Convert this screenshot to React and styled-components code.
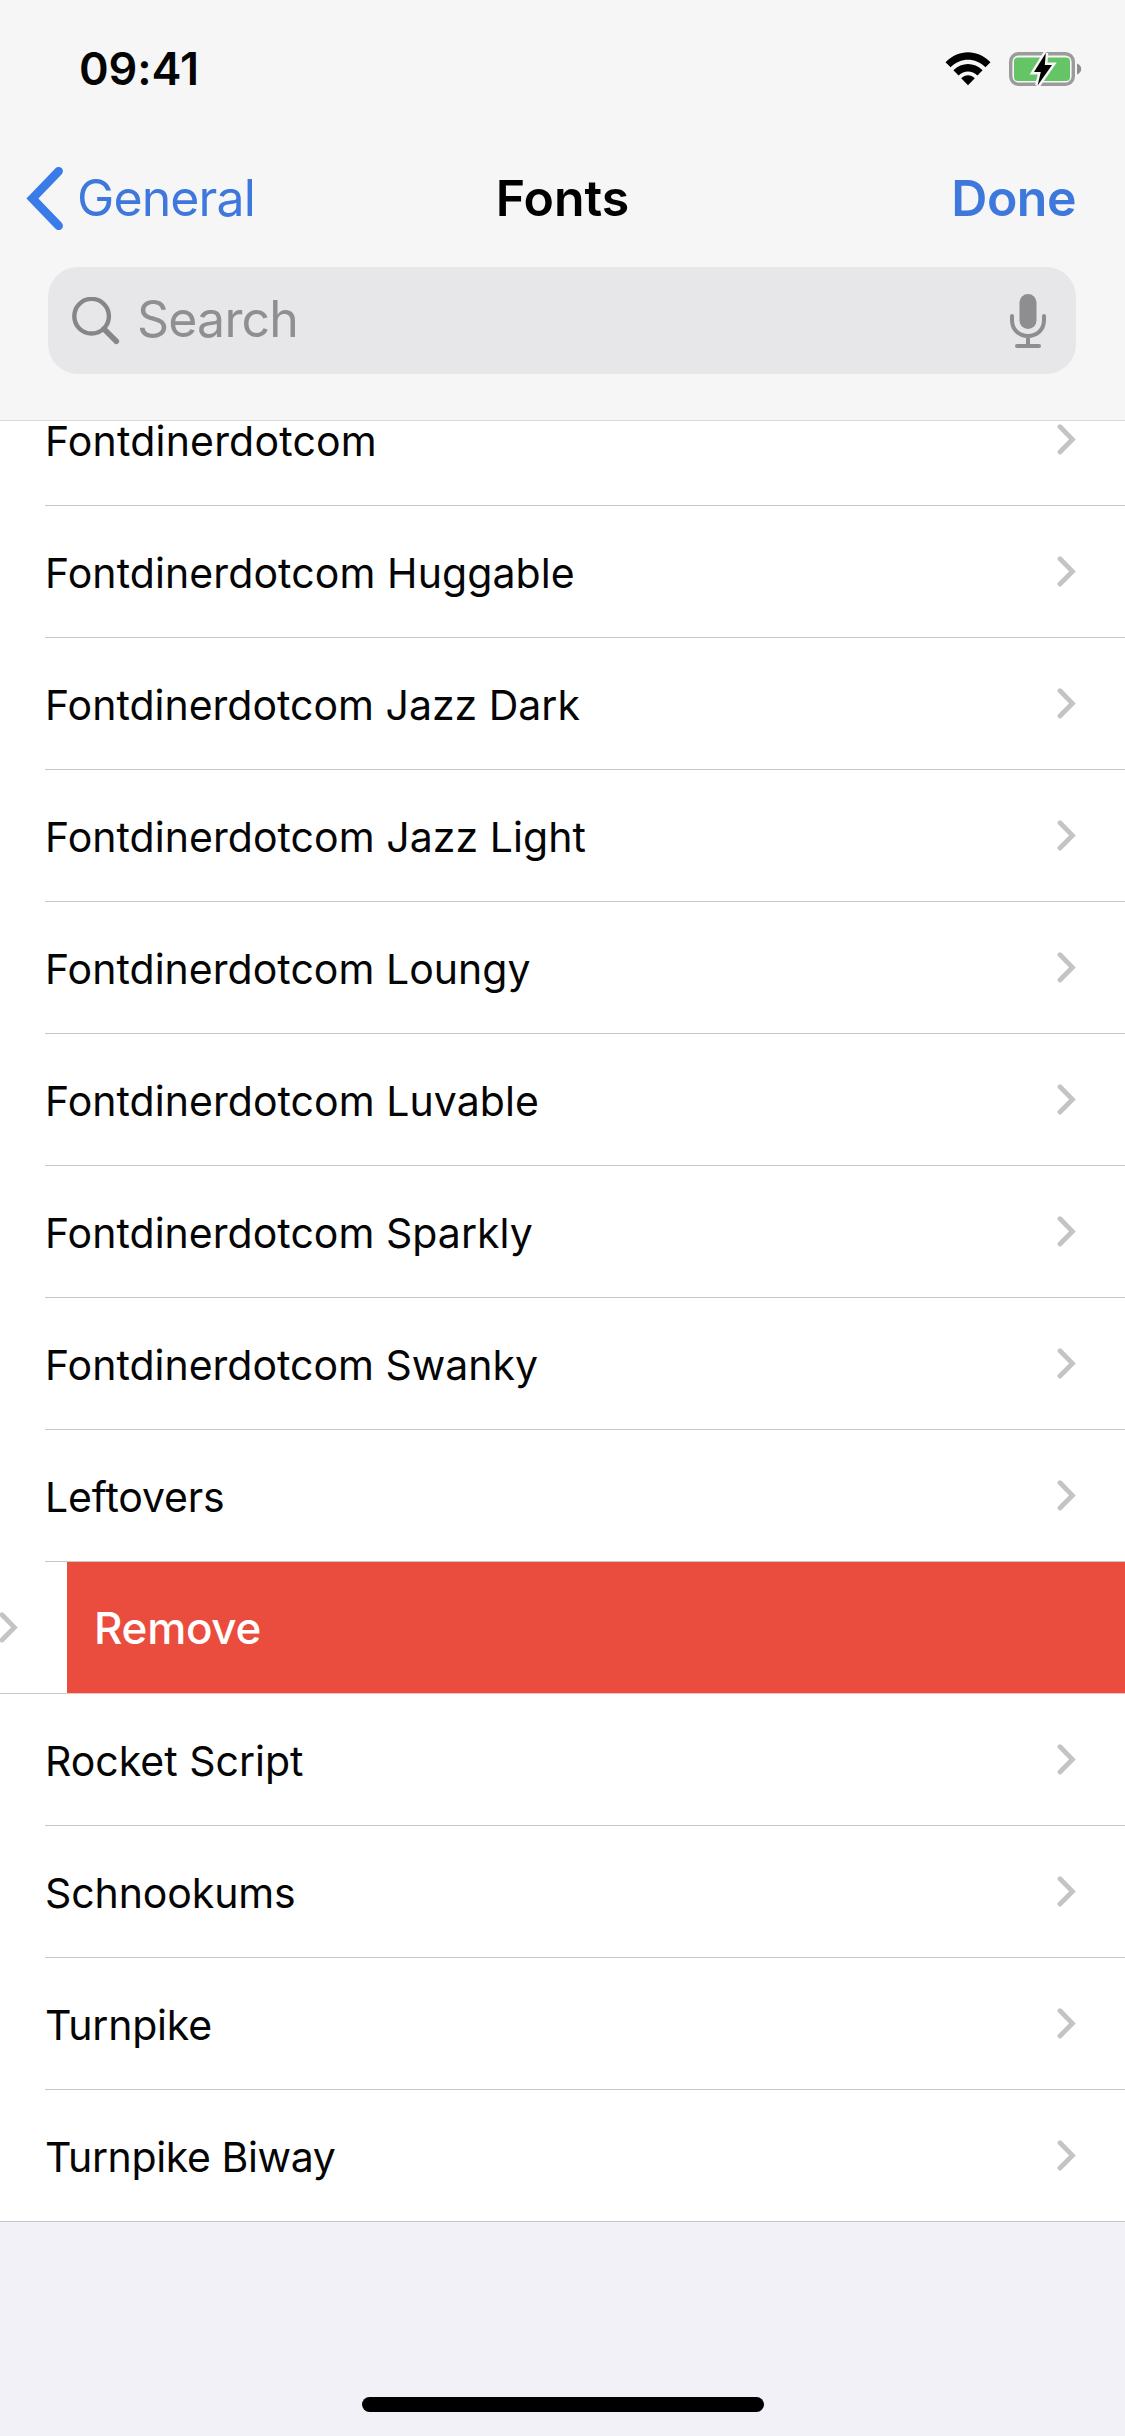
import React, { useState } from 'react';
import styled, { createGlobalStyle } from 'styled-components';

const GlobalStyle = createGlobalStyle`
  * {
    box-sizing: border-box;
  }

  body {
    margin: 0;
    background: #f2f1f7;
    font-family: Inter, 'Liberation Sans', sans-serif;
    font-kerning: normal;
  }

  svg {
    display: block;
    flex: none;
  }
`;

const Screen = styled.div`
  display: flex;
  flex-direction: column;
  width: 1125px;
  height: 2436px;
  overflow: hidden;
  background: #f2f1f7;
  color: #050505;
`;

const Header = styled.header`
  height: 421px;
  background: #f6f6f6;
  border-bottom: 1px solid #d9d9da;
`;

const StatusBar = styled.div`
  display: flex;
  align-items: center;
  justify-content: space-between;
  height: 138px;
  padding: 0 42px 0 79px;
`;

const Clock = styled.span`
  font-size: 45px;
  font-weight: 600;
  line-height: 60px;
  letter-spacing: -0.1px;
`;

const StatusIcons = styled.div`
  display: flex;
  align-items: center;
  gap: 18px;
`;

const NavBar = styled.nav`
  display: grid;
  grid-template-columns: 1fr auto 1fr;
  align-items: center;
  height: 120px;
  padding: 0 26px;
  font-size: 50px;
  line-height: 60px;
`;

const BackButton = styled.button`
  display: flex;
  align-items: center;
  gap: 13px;
  padding: 0;
  border: 0;
  background: none;
  color: #3f78dc;
  font: inherit;
  letter-spacing: -0.9px;
`;

const Title = styled.h1`
  margin: 0;
  color: #000;
  font-size: 50px;
  font-weight: 600;
  letter-spacing: 0;
`;

const DoneButton = styled.button`
  justify-self: end;
  margin-right: 23px;
  padding: 0;
  border: 0;
  background: none;
  color: #3f78dc;
  font: inherit;
  font-weight: 600;
  letter-spacing: -0.5px;
`;

const SearchField = styled.div`
  display: flex;
  align-items: center;
  height: 107px;
  margin: 9px 49px 0 48px;
  padding: 0 30px 0 24px;
  border-radius: 30px;
  background: #e7e7e9;
`;

const Placeholder = styled.span`
  flex: 1;
  margin-left: 17px;
  padding-bottom: 4px;
  color: #8f8f92;
  font-size: 50px;
  line-height: 60px;
  letter-spacing: -0.8px;
`;

const List = styled.ul`
  margin: 0;
  padding: 0;
  list-style: none;
  background: #fff;
`;

const Item = styled.li`
  display: flex;
  height: 132px;
  margin-left: ${({ $offset }) => -$offset}px;

  /* the list is scrolled, so the top row has lost its upper padding */
  &:first-child {
    height: 85px;
  }
`;

const Row = styled.div`
  flex: none;
  display: flex;
  width: 1125px;
  padding-left: ${({ $fullLine }) => ($fullLine ? 0 : 45)}px;
`;

const RowContent = styled.div`
  flex: 1;
  display: flex;
  align-items: center;
  justify-content: space-between;
  padding: 0 49px 0 ${({ $fullLine }) => ($fullLine ? 45 : 0)}px;
  border-bottom: 1px solid #c6c6c8;

  ${Item}:first-child & {
    padding-bottom: 47px;
  }
`;

const FontName = styled.span`
  padding-top: 2px;
  font-size: 41px;
  line-height: 32px;
  letter-spacing: ${({ $tracking }) => $tracking}px;
`;

const RemoveButton = styled.button`
  flex: none;
  width: ${({ $width }) => $width}px;
  padding: 0 0 0 27px;
  border: 0;
  border-bottom: 1px solid #f3c4be;
  background: #ea4d3d;
  color: #fff;
  font-family: inherit;
  font-size: 44px;
  font-weight: 500;
  line-height: 54px;
  letter-spacing: -0.3px;
  text-align: left;
`;

const HomeArea = styled.footer`
  flex: 1;
  display: flex;
  align-items: flex-end;
  justify-content: center;
  padding-bottom: 24px;
`;

const HomeIndicator = styled.div`
  width: 402px;
  height: 15px;
  border-radius: 8px;
  background: #000;
`;

const ACTION_WIDTH = 1058;

const fonts = [
  { name: 'Fontdinerdotcom', tracking: 0.2 },
  { name: 'Fontdinerdotcom Huggable', tracking: 0.1 },
  { name: 'Fontdinerdotcom Jazz Dark', tracking: 0 },
  { name: 'Fontdinerdotcom Jazz Light', tracking: 0.05 },
  { name: 'Fontdinerdotcom Loungy', tracking: 0.03 },
  { name: 'Fontdinerdotcom Luvable', tracking: 0.05 },
  { name: 'Fontdinerdotcom Sparkly', tracking: 0.03 },
  { name: 'Fontdinerdotcom Swanky', tracking: 0 },
  { name: 'Leftovers', tracking: -0.15 },
  { name: 'Permanent Waves', tracking: 0 },
  { name: 'Rocket Script', tracking: 0 },
  { name: 'Schnookums', tracking: -0.1 },
  { name: 'Turnpike', tracking: -0.2 },
  { name: 'Turnpike Biway', tracking: -0.38 },
];

const WifiIcon = () => (
  <svg width="46" height="34" viewBox="0 0 46 34">
    <path d="M0.5 10.2 C13 -3.2 33 -3.2 45.5 10.2 L40.4 15.2 C30.8 5.2 15.2 5.2 5.6 15.2 Z" />
    <path d="M8.4 18.2 C16.8 9.8 29.2 9.8 37.6 18.2 L32.4 23.4 C27 18.2 19 18.2 13.6 23.4 Z" />
    <path d="M16.2 26.2 C20.2 22.2 25.8 22.2 29.8 26.2 L23 33.2 Z" />
  </svg>
);

const BatteryIcon = () => (
  <svg width="74" height="42" viewBox="0 0 74 42">
    <rect x="1.7" y="5.7" width="62.6" height="30.6" rx="8" fill="none" stroke="#9b9b9b" strokeWidth="3.4" />
    <path d="M68 15.5 C73.6 17.4 73.6 24.6 68 26.5 Z" fill="#8e8e8e" />
    <rect x="5" y="9.5" width="56" height="23.5" rx="4" fill="#64c466" />
    <path
      d="M36.8 5 L25 24 H31.8 L28.6 37.5 L43 17 H35.8 Z"
      fill="#000"
      stroke="#f6f6f6"
      strokeWidth="5"
      paintOrder="stroke"
    />
  </svg>
);

const BackIcon = () => (
  <svg width="38" height="64" viewBox="0 0 38 64" fill="none" stroke="#3a7bea" strokeWidth="8.6" strokeLinecap="round">
    <path d="M32.6 5.2 L6.4 32.5 L32.6 59.8" />
  </svg>
);

const SearchIcon = () => (
  <svg width="48" height="48" viewBox="0 0 48 48" fill="none" stroke="#868689" strokeLinecap="round">
    <circle cx="19.6" cy="19.2" r="17.3" strokeWidth="4.4" />
    <path d="M32 32 L44.3 44.2" strokeWidth="5.6" />
  </svg>
);

const MicIcon = () => (
  <svg width="36" height="54" viewBox="0 0 36 54" fill="none" stroke="#8e8e90" strokeWidth="4" strokeLinecap="round">
    <rect x="9.5" y="0" width="17" height="35" rx="8.5" fill="#8e8e90" stroke="none" />
    <path d="M2 22 V26 C2 47.3 34 47.3 34 26 V22 M18 43 V52 M7 52 H29" />
  </svg>
);

const ChevronIcon = () => (
  <svg width="19" height="32" viewBox="0 0 19 32" fill="none" stroke="#c4c4c6" strokeWidth="4.8" strokeLinecap="round">
    <path d="M3 2.8 L15.4 15.4 L3 28" />
  </svg>
);

const App = () => {
  const [swiped, setSwiped] = useState('Permanent Waves');
  const [items, setItems] = useState(fonts);

  const handleRemove = (name) => {
    setItems(items.filter((item) => item.name !== name));
    setSwiped(null);
  };

  return (
    <Screen>
      <GlobalStyle />
      <Header>
        <StatusBar>
          <Clock>09:41</Clock>
          <StatusIcons>
            <WifiIcon />
            <BatteryIcon />
          </StatusIcons>
        </StatusBar>
        <NavBar>
          <BackButton>
            <BackIcon />
            General
          </BackButton>
          <Title>Fonts</Title>
          <DoneButton>Done</DoneButton>
        </NavBar>
        <SearchField>
          <SearchIcon />
          <Placeholder>Search</Placeholder>
          <MicIcon />
        </SearchField>
      </Header>

      <List>
        {items.map(({ name, tracking }, index) => {
          const open = name === swiped;
          const fullLine = open || index === items.length - 1;

          return (
            <Item key={name} $offset={open ? ACTION_WIDTH : 0}>
              <Row $fullLine={fullLine}>
                <RowContent $fullLine={fullLine}>
                  <FontName $tracking={tracking}>{open ? '' : name}</FontName>
                  <ChevronIcon />
                </RowContent>
              </Row>
              {open && (
                <RemoveButton $width={ACTION_WIDTH} onClick={() => handleRemove(name)}>
                  Remove
                </RemoveButton>
              )}
            </Item>
          );
        })}
      </List>

      <HomeArea>
        <HomeIndicator />
      </HomeArea>
    </Screen>
  );
};

export default App;
